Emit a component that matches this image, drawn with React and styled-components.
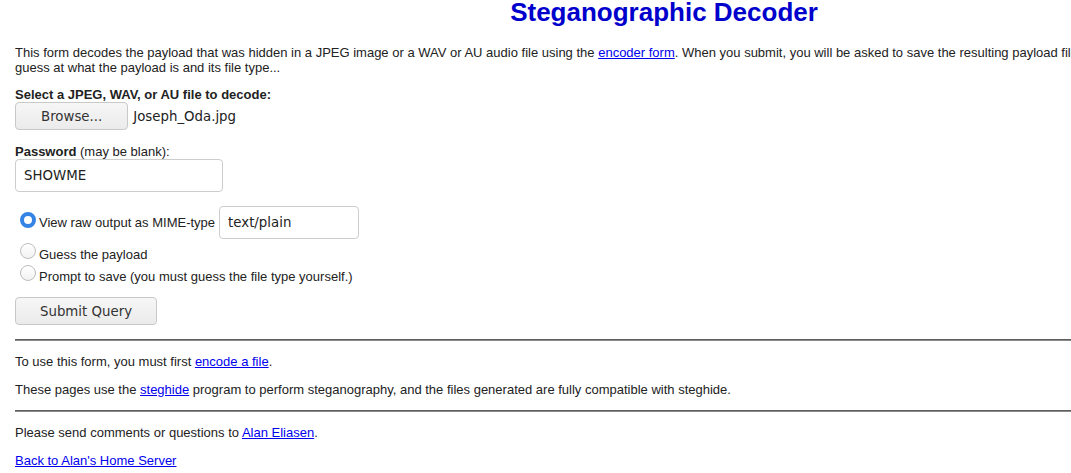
import React from 'react';
import styled, { createGlobalStyle } from 'styled-components';

const GlobalStyle = createGlobalStyle`
  html, body {
    margin: 0;
    padding: 0;
    background: #fff;
    overflow: hidden;
  }
`;

const Page = styled.div`
  width: 1298px;
  padding: 0 15px;

  font-family: 'Liberation Sans', Arial, sans-serif;
  font-size: 13px;
  line-height: 15px;
  color: #222;
`;

const Title = styled.h1`
  margin: 0;
  text-align: center;
  font-size: 26px;
  line-height: 24px;
  font-weight: bold;
  color: #0000cc;
`;

const Para = styled.p`
  margin: ${(p) => p.$top || 13}px 0 0 0;
  white-space: ${(p) => (p.$nowrap ? 'nowrap' : 'normal')};
`;

const Link = styled.a`
  color: #0000ee;
  text-decoration: underline;
`;

const Label = styled.div`
  margin-top: ${(p) => p.$top || 12}px;
`;

const FileRow = styled.div`
  display: flex;
  align-items: center;
  gap: 5px;
`;

const Button = styled.button`
  height: 28px;
  padding: 0 ${(p) => p.$pad || 25}px;
  margin: ${(p) => p.$top || 0}px 0 0 0;

  font-family: 'DejaVu Sans', sans-serif;
  font-size: 13.33px;
  color: #333;

  background: linear-gradient(#f6f6f6, #ebebeb);
  border: 1px solid #c9c9c9;
  border-radius: 4px;
`;

const FileName = styled.span`
  font-family: 'DejaVu Sans', sans-serif;
  font-size: 13.33px;
  color: #222;
`;

const TextInput = styled.input`
  box-sizing: border-box;
  width: ${(p) => p.$width}px;
  height: 33px;
  padding: 0 8px;

  font-family: 'DejaVu Sans', sans-serif;
  font-size: 13.33px;
  color: #222;

  background: #fff;
  border: 1px solid #cdcdcd;
  border-radius: 4px;
  outline: none;
`;

const Choices = styled.div`
  margin-top: 14px;
  display: flex;
  flex-direction: column;
`;

const Choice = styled.label`
  display: flex;
  align-items: center;
  min-height: ${(p) => p.$height || 22}px;
  margin-top: ${(p) => p.$top || 0}px;
`;

const Radio = styled.input.attrs({ type: 'radio' })`
  appearance: none;
  box-sizing: border-box;
  width: 16px;
  height: 16px;
  margin: 0 3px 6px 5px;
  border-radius: 50%;
  flex-shrink: 0;

  background: linear-gradient(#fff, #f2f2f2);
  border: 1px solid #bdbdbd;

  &:checked {
    background: #fff;
    border: 4px solid #3584e4;
  }
`;

const ChoiceText = styled.span`
  margin-right: 4px;
`;

const Rule = styled.hr`
  margin: ${(p) => p.$top || 14}px 0 0 0;
  height: 0;
  border: 0;
  border-top: 1px solid #5e5e5e;
  border-bottom: 1px solid #8a8a8a;
`;

const Steganography = () => {
  return (
    <Page>
      <GlobalStyle />
      <Title>Steganographic Decoder</Title>

      <Para $top={21} $nowrap>
        This form decodes the payload that was hidden in a JPEG image or a WAV or AU audio file using the{' '}
        <Link href="#">encoder form</Link>. When you submit, you will be asked to save the resulting payload file,
        or you may view it, so you will have to make a
        <br />
        guess at what the payload is and its file type...
      </Para>

      <Label $top={12}>
        <b>Select a JPEG, WAV, or AU file to decode:</b>
      </Label>
      <FileRow>
        <Button $pad={25}>Browse...</Button>
        <FileName>Joseph_Oda.jpg</FileName>
      </FileRow>

      <Label $top={14}>
        <b>Password</b> (may be blank):
      </Label>
      <TextInput $width={208} defaultValue="SHOWME" />

      <Choices>
        <Choice $height={33}>
          <Radio name="mode" defaultChecked />
          <ChoiceText>View raw output as MIME-type</ChoiceText>
          <TextInput $width={140} defaultValue="text/plain" />
        </Choice>
        <Choice $top={4}>
          <Radio name="mode" />
          <ChoiceText>Guess the payload</ChoiceText>
        </Choice>
        <Choice>
          <Radio name="mode" />
          <ChoiceText>Prompt to save (you must guess the file type yourself.)</ChoiceText>
        </Choice>
      </Choices>

      <Button $pad={24} $top={10}>
        Submit Query
      </Button>

      <Rule $top={14} />
      <Para>
        To use this form, you must first <Link href="#">encode a file</Link>.
      </Para>
      <Para>
        These pages use the <Link href="#">steghide</Link> program to perform steganography, and the files generated
        are fully compatible with steghide.
      </Para>

      <Rule $top={13} />
      <Para>
        Please send comments or questions to <Link href="#">Alan Eliasen</Link>.
      </Para>
      <Para>
        <Link href="#">Back to Alan's Home Server</Link>
      </Para>
    </Page>
  );
};

export default Steganography;
